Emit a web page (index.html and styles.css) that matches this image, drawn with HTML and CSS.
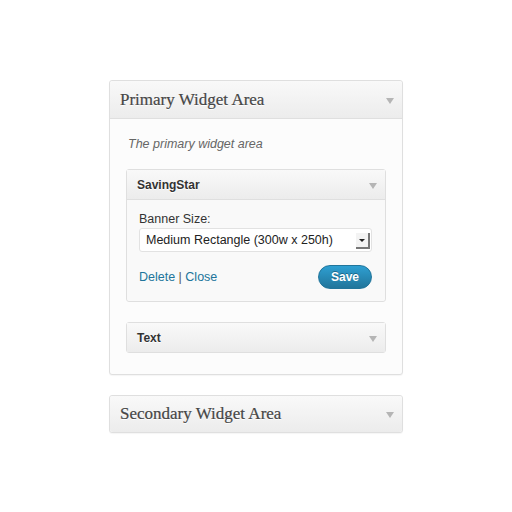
FILE: index.html
```html
<!DOCTYPE html>
<html lang="en">
<head>
    <meta charset="UTF-8">
    <title>Widgets</title>
    <link rel="stylesheet" href="styles.css">
</head>
<body>
    <div class="sidebar">
        <div class="area">
            <div class="area-head">
                <h3>Primary Widget Area</h3>
                <span class="arrow"></span>
            </div>
            <div class="area-body">
                <p class="desc">The primary widget area</p>

                <div class="widget open">
                    <div class="widget-head">
                        <h4>SavingStar</h4>
                        <span class="arrow"></span>
                    </div>
                    <div class="widget-body">
                        <label>Banner Size:</label>
                        <div class="select">
                            <span>Medium Rectangle (300w x 250h)</span>
                            <span class="select-btn"></span>
                        </div>
                        <div class="actions">
                            <div class="links"><a href="#">Delete</a> | <a href="#">Close</a></div>
                            <button class="save">Save</button>
                        </div>
                    </div>
                </div>

                <div class="widget">
                    <div class="widget-head">
                        <h4>Text</h4>
                        <span class="arrow"></span>
                    </div>
                </div>
            </div>
        </div>

        <div class="area">
            <div class="area-head closed">
                <h3>Secondary Widget Area</h3>
                <span class="arrow"></span>
            </div>
        </div>
    </div>
</body>
</html>
```

FILE: styles.css
```css
body {
    margin: 0;
    background: #fff;
    font-family: "Liberation Sans", Arial, sans-serif;
    color: #333;
}

.sidebar {
    width: 294px;
    margin: 80px auto 0;
}

.area {
    border: 1px solid #dfdfdf;
    border-radius: 3px;
    background: #fcfcfc;
    margin-bottom: 20px;
    box-shadow: 0 1px 1px rgba(0, 0, 0, 0.04);
}

.area-head {
    height: 37px;
    display: flex;
    align-items: center;
    justify-content: space-between;
    padding: 0 10px;
    background: linear-gradient(#f9f9f9, #ececec);
    border-bottom: 1px solid #dfdfdf;
    border-radius: 3px 3px 0 0;
}

.area-head.closed {
    height: 36px;
    border-bottom: none;
    border-radius: 3px;
}

.area-head h3 {
    margin: 0;
    font-family: "Liberation Serif", Georgia, serif;
    font-weight: normal;
    font-size: 17px;
    color: #464646;
    text-shadow: 0 1px 0 #fff;
    -webkit-text-stroke: 0.2px #464646;
}

.arrow {
    width: 0;
    height: 0;
    border-left: 4px solid transparent;
    border-right: 4px solid transparent;
    border-top: 6px solid #b5b5b5;
    margin-right: -2px;
    margin-top: 2px;
}

.area-body {
    padding: 18px 16px 21px;
}

.desc {
    margin: 0 0 18px 2px;
    font-style: italic;
    font-size: 12.5px;
    color: #666;
}

.widget {
    border: 1px solid #dfdfdf;
    border-radius: 3px;
    background: #f9f9f9;
    margin-bottom: 20px;
}

.widget:last-child {
    margin-bottom: 0;
}

.widget-head {
    height: 29px;
    display: flex;
    align-items: center;
    justify-content: space-between;
    padding: 0 10px;
    background: linear-gradient(#f9f9f9, #ececec);
}

.widget.open .widget-head {
    border-bottom: 1px solid #dfdfdf;
    height: 29px;
}

.widget-head h4 {
    margin: 0;
    font-size: 12px;
    font-weight: bold;
    color: #333;
    text-shadow: 0 1px 0 #fff;
}

.widget-head .arrow {
    margin-right: -2px;
}

.widget-body {
    padding: 12px 13px 12px 12px;
    background: #f9f9f9;
    border-radius: 0 0 3px 3px;
}

label {
    display: block;
    font-size: 12.5px;
    color: #333;
    margin-bottom: 2px;
}

.select {
    height: 22px;
    display: flex;
    align-items: center;
    justify-content: space-between;
    border: 1px solid #e2e2e2;
    border-radius: 3px;
    background: #fff;
    padding: 0 1px 0 6px;
    font-size: 12.5px;
    color: #222;
}

.select-btn {
    width: 12px;
    height: 14px;
    border-right: 2px solid #777;
    border-bottom: 2px solid #777;
    background: #f3f3f3;
    position: relative;
    margin-top: 2px;
}

.select-btn::after {
    content: "";
    position: absolute;
    left: 3px;
    top: 6px;
    border-left: 3px solid transparent;
    border-right: 3px solid transparent;
    border-top: 3px solid #222;
}

.actions {
    display: flex;
    align-items: center;
    justify-content: space-between;
    margin-top: 13px;
}

.links {
    font-size: 12.5px;
    color: #555;
}

.links a {
    color: #21759b;
    text-decoration: none;
}

.save {
    width: 54px;
    height: 24px;
    border: 1px solid #21759b;
    border-radius: 12px;
    background: linear-gradient(#2e9fd2, #21759b);
    color: #fff;
    font-family: "Liberation Sans", Arial, sans-serif;
    font-weight: bold;
    font-size: 12px;
    text-shadow: 0 -1px 0 rgba(0, 0, 0, 0.3);
    padding: 0;
    cursor: pointer;
}
```
